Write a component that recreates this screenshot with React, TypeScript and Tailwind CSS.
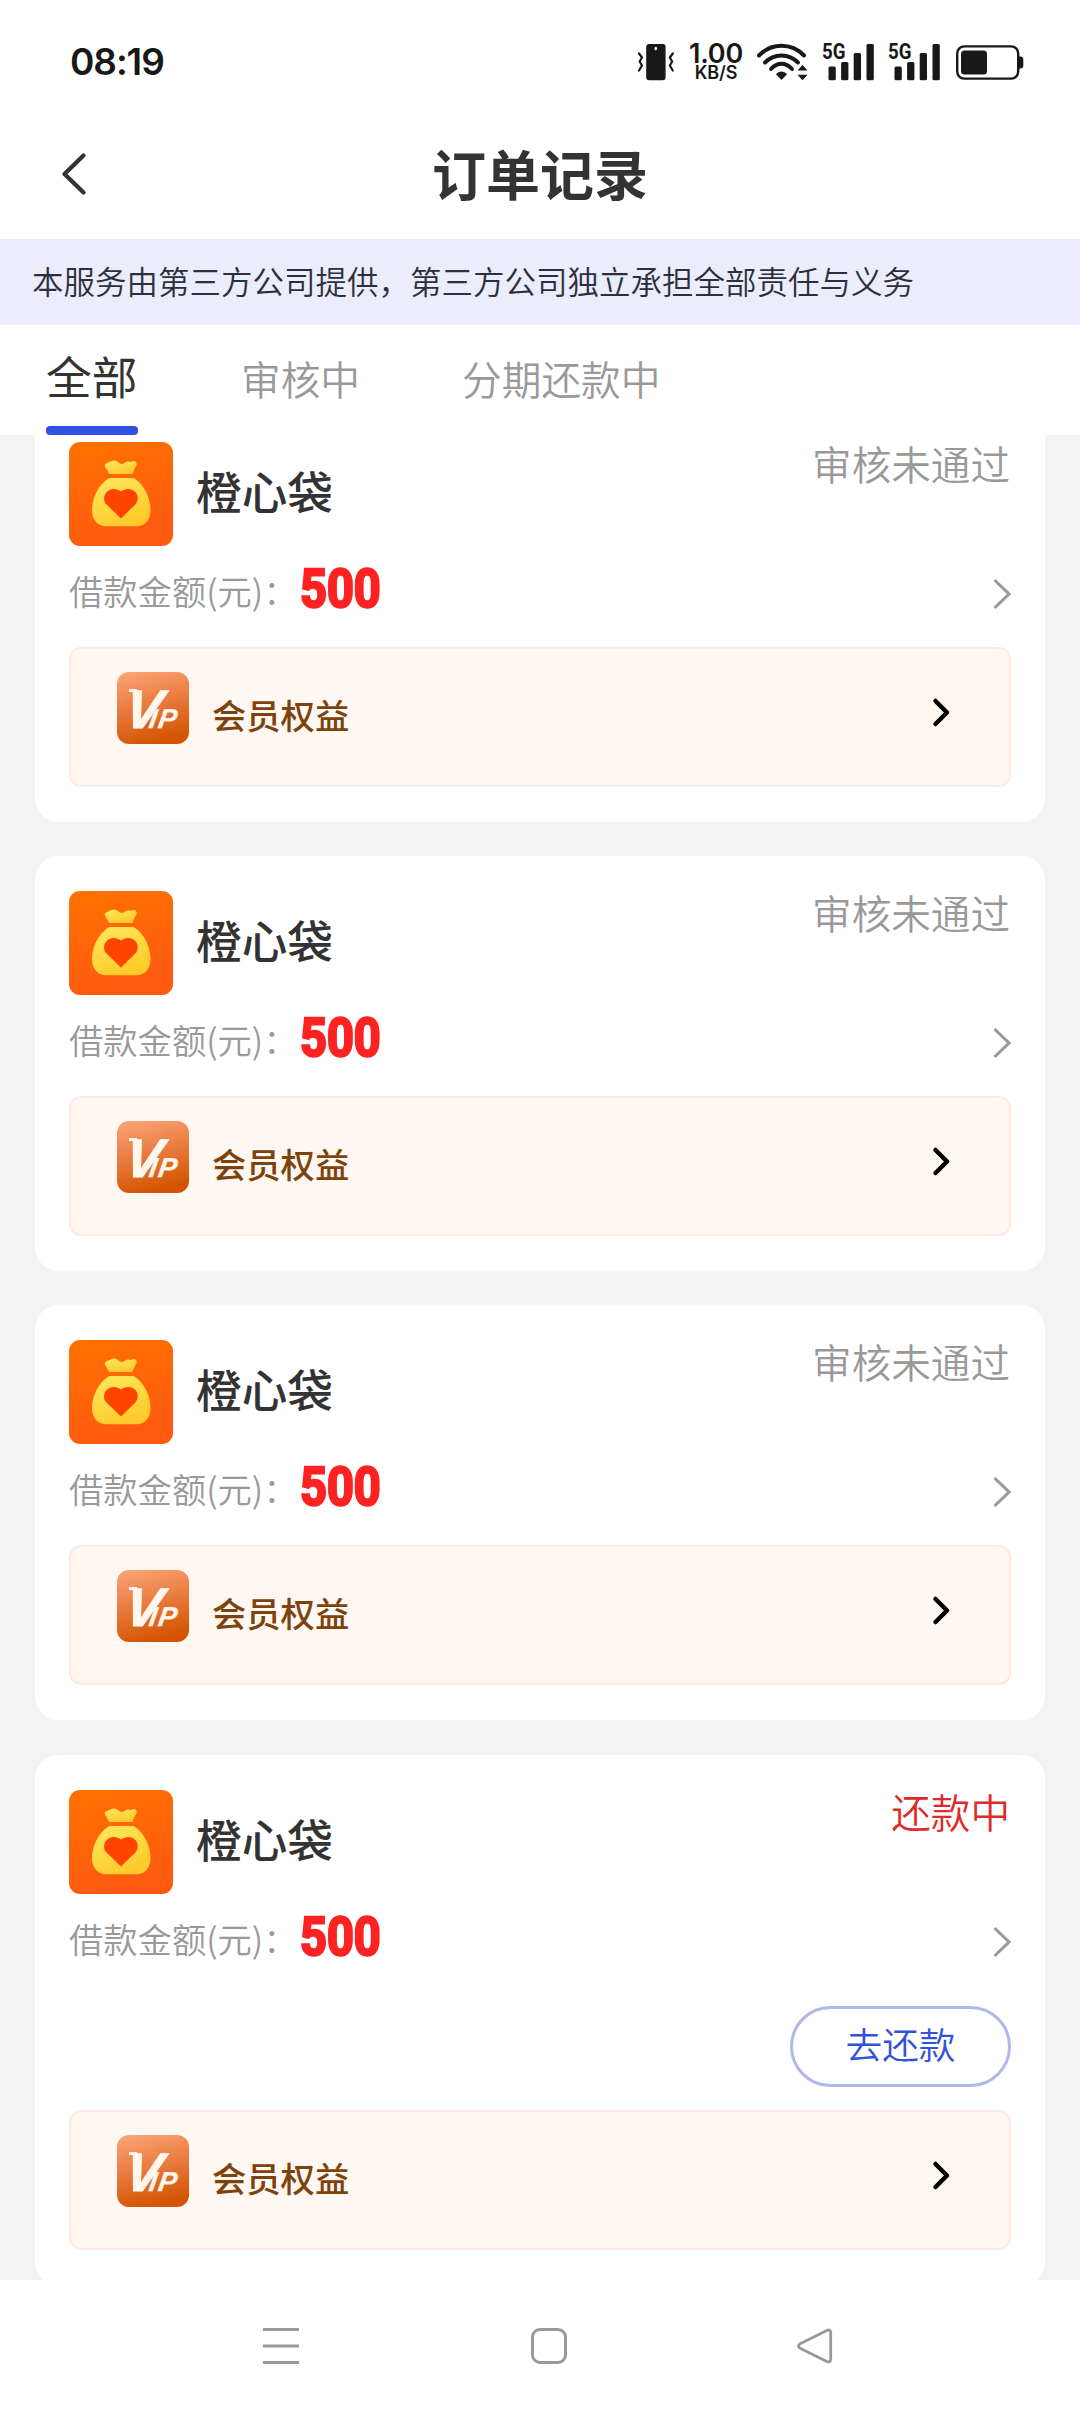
const cjk = "font-['Noto_Sans_CJK_SC',sans-serif]";

function VibrateIcon() {
  return (
    <svg width="38" height="38" viewBox="0 0 38 38" fill="none" stroke="#181818" strokeWidth="2.2" strokeLinecap="round" strokeLinejoin="round">
      <rect x="9.2" y="1" width="19.4" height="36.200" rx="3" fill="#181818" stroke="none" />
      <ellipse cx="18.8" cy="5.6" rx="1.3" ry="1.8" fill="#fff" stroke="none" />
      <path d="M2 10.5l3 4-2.4 4 2.4 4-3 5" />
      <path d="M35.8 10.5l-3 4 2.4 4-2.4 4 3 5" />
    </svg>
  );
}

function WifiIcon() {
  return (
    <svg width="52" height="38" viewBox="0 0 52 38" fill="none" stroke="#181818" strokeWidth="4">
      <path d="M2 12.5C14.5 -.5 34.500 -.5 47 12.500" strokeLinecap="round" />
      <path d="M8 19.500C17 10 32 10 41 19.500" strokeLinecap="round" />
      <path d="M14 26C20.500 19 28.500 19 35 26" strokeLinecap="round" />
      <path d="M24.500 37l-5.500-5.800c3-3.600 8-3.600 11 0z" fill="#181818" stroke="none" />
      <path d="M45.500 22l5 5.500h-10zM45.500 37.200l-5-5.500h10z" fill="#181818" stroke="none" />
    </svg>
  );
}

function SignalIcon() {
  return (
    <svg className="-mt-[6px]" width="53" height="44" viewBox="0 -6 53 44" fill="#181818">
      <text x="0" y="16.200" fontSize="22.500" fontWeight="700" textLength="23.500" lengthAdjust="spacingAndGlyphs" fontFamily="Roboto, sans-serif">5G</text>
      <rect x="6.500" y="23.500" width="7.300" height="13.700" rx="1.500" />
      <rect x="19.100" y="19" width="7.300" height="18.200" rx="1.500" />
      <rect x="31.700" y="10" width="7.300" height="27.200" rx="1.500" />
      <rect x="44.500" y="1" width="7.300" height="36.200" rx="1.500" />
    </svg>
  );
}

function BatteryIcon() {
  return (
    <svg width="68" height="36" viewBox="0 0 68 36">
      <rect x="1.200" y="1.400" width="61" height="32.200" rx="7" fill="none" stroke="#181818" strokeWidth="2.400" />
      <rect x="5" y="5.500" width="26" height="24" rx="3.500" fill="#181818" />
      <path d="M63 11.500h1.500a3 3 0 0 1 2.800 3v6a3 3 0 0 1-2.800 3H63z" fill="#181818" />
    </svg>
  );
}

function StatusBar() {
  return (
    <header className="flex h-[123px] shrink-0 items-center pl-[70px] text-[#181818]">
      <div className="w-[567px] font-[Inter,sans-serif] text-[37px] font-semibold leading-none tracking-[-1.100px]">08:19</div>
      <VibrateIcon />
      <div className="ml-[11px] flex w-[60px] flex-col items-center pt-[2px] font-[Inter,sans-serif]">
        <span className="text-[27px] font-semibold leading-[20px] tracking-[-0.200px]">1.00</span>
        <span className="text-[18px] font-semibold leading-[18px] tracking-[-0.100px]">KB/S</span>
      </div>
      <div className="ml-[11px]"><WifiIcon /></div>
      <div className="ml-[13px]"><SignalIcon /></div>
      <div className="ml-[13px]"><SignalIcon /></div>
      <div className="ml-[15px] pt-[2px]"><BatteryIcon /></div>
    </header>
  );
}

function TitleBar() {
  return (
    <div className="grid h-[116px] shrink-0 grid-cols-[1fr_auto_1fr] items-start">
      <svg className="ml-[60px] mt-[29px]" width="28" height="44" viewBox="0 0 28 44" fill="none" stroke="#333" strokeWidth="4.300" strokeLinecap="round" strokeLinejoin="round">
        <path d="M23.500 3.500L4.500 22 23.500 40.500" />
      </svg>
      <h1 className="mt-[10px] text-[54px] font-bold leading-[80px] text-[#333]">订单记录</h1>
    </div>
  );
}

function BagIcon() {
  return (
    <svg className="shrink-0" width="104" height="104" viewBox="0 0 104 104">
      <defs>
        <linearGradient id="bagBg" x1="0" y1="0" x2="0.300" y2="1">
          <stop offset="0" stopColor="#ff7200" />
          <stop offset="1" stopColor="#ff5a10" />
        </linearGradient>
        <linearGradient id="bagFill" x1="0" y1="0" x2="0.500" y2="1">
          <stop offset="0" stopColor="#ffe960" />
          <stop offset="1" stopColor="#ffca2a" />
        </linearGradient>
      </defs>
      <rect width="104" height="104" rx="11" fill="url(#bagBg)" />
      <path d="M35.800 23.500c0-1.200 1-2 2.200-2.400 2.800-.9 4-2.600 7.300-2.600 3.400 0 4.200 3.400 7.300 3.400s4-2.500 6.500-2.300c2.200.1 1.800.9 4.400-.4 2.300-.8 4.500.8 4.200 3.400-.3 2.300-2.200 2.600-4.200 9.500H40c-1.200-4.500-4.200-6.300-4.200-8.600z" fill="url(#bagFill)" />
      <path d="M40.500 36h24C73 40.500 81.500 54 81.500 68c0 10-5.500 16.200-14 16.200h-30C28.500 84.200 23 78 23 68c0-14 8.500-27.500 17.500-32z" fill="url(#bagFill)" />
      <path d="M52 76.500L37.500 62.500c-3.500-3.800-3-9.200.2-12.500 3.800-4 10-4 14.300-.4 4.300-3.600 10.500-3.600 14.300.4 3.200 3.300 3.300 8.700 0 12.500z" fill="#ff4400" />
    </svg>
  );
}

function VipIcon() {
  return (
    <svg className="shrink-0" width="72" height="72" viewBox="0 0 72 72">
      <defs>
        <linearGradient id="vipBg" x1="0.250" y1="0" x2="0.500" y2="1">
          <stop offset="0" stopColor="#f9a272" />
          <stop offset="0.500" stopColor="#e9783c" />
          <stop offset="1" stopColor="#d35300" />
        </linearGradient>
      </defs>
      <rect width="72" height="72" rx="12" fill="url(#vipBg)" />
      <path d="M12 17h8v3h-8z" fill="#fff6ec" />
      <text transform="translate(6 55.5) skewX(-9)" fill="#fff6ec" stroke="#fff6ec" strokeWidth="1.100" fontFamily="Liberation Sans, sans-serif" fontWeight="700" fontStyle="italic" fontSize="54">
        V<tspan dx="-11" fontSize="27.500" strokeWidth="0.300" letterSpacing="1.500">IP</tspan>
      </text>
    </svg>
  );
}

function VipBenefits() {
  return (
    <div className="flex h-[140px] items-start rounded-[12px] border-2 border-[#fbebe0] bg-[#fff7f1] pl-[46px] pr-[57px] pt-[23px]">
      <VipIcon />
      <span className="ml-[23px] mt-[17px] text-[34.300px] font-medium leading-[51px] text-[#7d430c]">会员权益</span>
      <svg className="ml-auto mt-[24px]" width="22" height="34" viewBox="0 0 22 34" fill="none" stroke="#000" strokeWidth="4.500" strokeLinecap="round" strokeLinejoin="round">
        <path d="M5.500 5L17 16.500 5.500 28" />
      </svg>
    </div>
  );
}

type Order = { status: string; repaying?: boolean };

function OrderCard({ status, repaying }: Order) {
  return (
    <article className="shrink-0 rounded-[24px] bg-white px-[34px] pb-[35px] pt-[35px]">
      <div className="flex h-[104px] items-start">
        <BagIcon />
        <h2 className="ml-[23px] mt-[14px] text-[45.700px] font-medium leading-[68px] text-[#333]">橙心袋</h2>
        <span className={repaying ? "ml-auto -mt-[8px] mr-[1px] text-[39.600px] font-[350] leading-[58px] text-[#e02a2a]" : "ml-auto -mt-[8px] mr-[1px] text-[39.600px] font-[350] leading-[58px] text-[#999]"}>{status}</span>
      </div>
      <div className="flex h-[101px] items-start">
        <span className="mt-[19px] w-[230.500px] whitespace-nowrap text-[34.300px] font-[350] leading-[50px] text-[#999]">借款金额(元)：</span>
        <span className="mt-[13px] origin-left scale-x-[0.885] font-[Roboto,sans-serif] text-[53px] font-bold leading-[60px] text-[#ff2222] [-webkit-text-stroke:2.500px_#ff2222]">500</span>
        <svg className="ml-auto mt-[31px]" width="20" height="34" viewBox="0 0 20 34" fill="none" stroke="#999" strokeWidth="3">
          <path d="M3.500 3L18 17 3.500 31" />
        </svg>
      </div>
      {repaying && (
        <div className="mb-[23px] mt-[11px] flex justify-end">
          <button className="h-[81px] w-[221px] rounded-full border-3 border-[#b0b8ea] pb-[6px] text-[36.700px] font-[350] leading-none text-[#3350dc]">去还款</button>
        </div>
      )}
      <VipBenefits />
    </article>
  );
}

const orders: Order[] = [
  { status: "审核未通过" },
  { status: "审核未通过" },
  { status: "审核未通过" },
  { status: "还款中", repaying: true },
];

function NavBar() {
  return (
    <nav className="flex h-[132px] shrink-0 items-start bg-white pl-[263px] pt-[48px] text-[#999]">
      <svg width="36" height="36" viewBox="0 0 36 36" stroke="currentColor" strokeWidth="3">
        <path d="M0 1.500H36M0 18H36M0 34.500H36" />
      </svg>
      <svg className="ml-[232px]" width="36" height="36" viewBox="0 0 36 36" fill="none" stroke="currentColor" strokeWidth="3">
        <rect x="1.500" y="1.500" width="33" height="33" rx="7.500" />
      </svg>
      <svg className="ml-[230px]" width="36" height="36" viewBox="0 0 36 36" fill="none" stroke="currentColor" strokeWidth="2.800" strokeLinejoin="round">
        <path d="M2.600 16L29.800 2.400Q33.400 1 33.700 4.500V31.500Q33.400 35 29.800 33.600L2.600 20Q.4 18 2.600 16z" />
      </svg>
    </nav>
  );
}

export default function App() {
  return (
    <div className={`flex h-[2412px] w-[1080px] flex-col overflow-hidden bg-white ${cjk}`}>
      <StatusBar />
      <TitleBar />
      <div className="flex h-[86px] shrink-0 items-center bg-[#ebedfc] pb-[2px] pl-[32px] text-[31.500px] font-[350] text-[#2c2f3b]">
        本服务由第三方公司提供，第三方公司独立承担全部责任与义务
      </div>
      <div className="flex h-[110px] shrink-0 items-start bg-white pl-[46px]">
        <div className="flex h-[110px] w-[92px] flex-col">
          <span className="mt-[17px] whitespace-nowrap text-[45.700px] leading-[66px] text-[#333]">全部</span>
          <span className="mt-auto h-[9px] rounded-[4px] bg-[#3350e6]" />
        </div>
        <span className="ml-[103px] mt-[23.500px] text-[39.700px] font-[350] leading-[58px] text-[#999]">审核中</span>
        <span className="ml-[102px] mt-[23.500px] text-[39.700px] font-[350] leading-[58px] text-[#999]">分期还款中</span>
      </div>
      <main className="min-h-0 flex-1 overflow-hidden bg-[#f3f3f3] px-[35px]">
        <div className="-mt-[28.500px] flex flex-col gap-[34.400px]">
          {orders.map((order, i) => (
            <OrderCard key={i} {...order} />
          ))}
        </div>
      </main>
      <NavBar />
    </div>
  );
}
